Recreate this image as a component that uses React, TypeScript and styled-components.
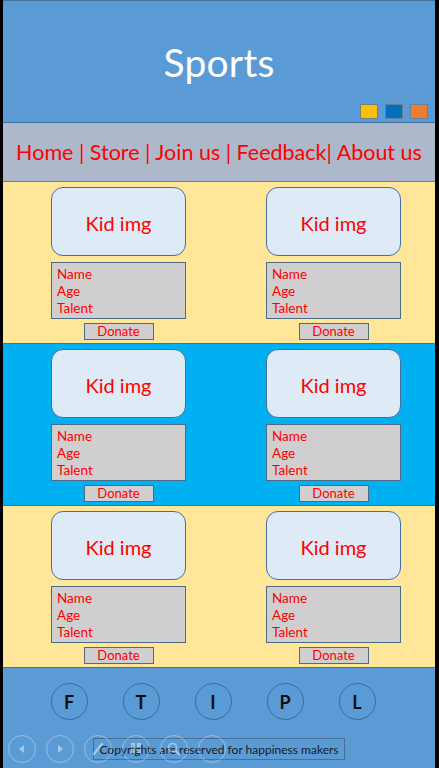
import React from "react";
import styled, { createGlobalStyle } from "styled-components";

const Global = createGlobalStyle`
  html, body { margin: 0; padding: 0; background: #000; }
  body { font-family: Lato, "Open Sans", sans-serif; }
`;

const Frame = styled.div`
  width: 432px;
  margin-left: 3px;
  height: 768px;
  display: flex;
  flex-direction: column;
  border-top: 1px solid #41719c;
  box-sizing: border-box;
  overflow: hidden;
`;

const Header = styled.header`
  height: 122px;
  background: #5b9bd5;
  border-bottom: 1px solid #41719c;
  display: flex;
  flex-direction: column;
  box-sizing: border-box;
`;

const Title = styled.h1`
  flex: 1;
  margin: 0;
  display: flex;
  align-items: center;
  justify-content: center;
  padding-top: 18px;
  color: #fff;
  font-weight: 400;
  font-size: 39px;
  letter-spacing: 0.2px;
`;

const Swatches = styled.div`
  display: flex;
  justify-content: flex-end;
  gap: 7px;
  padding: 0 7px 3px 0;
`;

const Swatch = styled.span<{ $c: string }>`
  width: 18px;
  height: 15px;
  box-sizing: border-box;
  background: ${(p) => p.$c};
  border: 1px solid #6d7f95;
`;

const Nav = styled.nav`
  height: 59px;
  background: #adb9ca;
  border-bottom: 1px solid #6b7c8f;
  box-sizing: border-box;
  display: flex;
  align-items: center;
  justify-content: center;
  color: #ff0000;
  font-size: 21.5px;
  white-space: pre;
  padding-bottom: 1px;
`;

const Band = styled.section<{ $bg: string }>`
  height: 162px;
  box-sizing: border-box;
  background: ${(p) => p.$bg};
  border-bottom: 1px solid #41719c;
  display: grid;
  grid-template-columns: 135px 135px;
  column-gap: 80px;
  padding: 5px 0 0 48px;
`;

const Card = styled.div`
  display: flex;
  flex-direction: column;
  align-items: center;
`;

const KidImg = styled.div`
  width: 135px;
  height: 69px;
  box-sizing: border-box;
  background: #deebf7;
  border: 1px solid #41719c;
  border-radius: 12px;
  display: flex;
  align-items: center;
  justify-content: center;
  color: #ff0000;
  font-size: 20px;
  padding-top: 2px;
`;

const Info = styled.div`
  margin-top: 6px;
  width: 135px;
  height: 57px;
  box-sizing: border-box;
  background: #d0cece;
  border: 1px solid #4e6b84;
  padding: 3px 0 0 5px;
  color: #ff0000;
  font-size: 13.5px;
  line-height: 17px;
`;

const Donate = styled.button`
  margin-top: 4px;
  width: 70px;
  height: 17px;
  box-sizing: border-box;
  background: #d0cece;
  border: 1px solid #4e6b84;
  padding: 0;
  color: #ff0000;
  font-family: inherit;
  font-size: 13px;
  line-height: 15px;
`;

const Footer = styled.footer`
  position: relative;
  flex: 1;
  background: #5b9bd5;
  display: flex;
  flex-direction: column;
  align-items: center;
  padding-top: 15px;
`;

const Socials = styled.div`
  display: flex;
  gap: 35px;
  margin-left: -12px;
`;

const Social = styled.div`
  width: 37px;
  height: 37px;
  box-sizing: border-box;
  border-radius: 50%;
  border: 1px solid #3a6a9a;
  display: flex;
  align-items: center;
  justify-content: center;
  font-weight: 700;
  font-size: 18px;
  color: #0d0d0d;
  padding-top: 1px;
`;

const Copy = styled.div`
  margin-top: 18px;
  width: 252px;
  height: 22px;
  box-sizing: border-box;
  border: 1px solid #4c6f95;
  display: flex;
  align-items: center;
  justify-content: center;
  font-size: 12px;
  color: #1a1a1a;
`;

const Controls = styled.div`
  position: absolute;
  left: 5px;
  top: 67px;
  display: flex;
  gap: 10px;
`;

const Ctrl = styled.div`
  width: 28px;
  height: 28px;
  box-sizing: border-box;
  border-radius: 50%;
  border: 1.5px solid rgba(255, 255, 255, 0.35);
  display: flex;
  align-items: center;
  justify-content: center;
`;

const faint = "rgba(255,255,255,0.45)";

const icons = [
  <svg width="12" height="12" viewBox="0 0 12 12"><path d="M8 2 L3 6 L8 10 Z" fill={faint} /></svg>,
  <svg width="12" height="12" viewBox="0 0 12 12"><path d="M4 2 L9 6 L4 10 Z" fill={faint} /></svg>,
  <svg width="16" height="16" viewBox="0 0 16 16"><path d="M12 3 L4 13" stroke={faint} strokeWidth="2.5" strokeLinecap="round" /></svg>,
  <svg width="16" height="16" viewBox="0 0 16 16"><rect x="3" y="2" width="4" height="4" fill={faint} /><rect x="9" y="2" width="4" height="4" fill={faint} /><rect x="3" y="8" width="4" height="4" fill={faint} /><rect x="9" y="8" width="4" height="4" fill={faint} /></svg>,
  <svg width="16" height="16" viewBox="0 0 16 16"><circle cx="6.5" cy="6.5" r="4" stroke={faint} strokeWidth="1.6" fill="none" /><path d="M9.5 9.5 L14 14" stroke={faint} strokeWidth="2" /></svg>,
  <svg width="16" height="16" viewBox="0 0 16 16"></svg>,
];

const bands = ["#ffe699", "#00b0f0", "#ffe699"];

function KidCard() {
  return (
    <Card>
      <KidImg>Kid img</KidImg>
      <Info>
        Name
        <br />
        Age
        <br />
        Talent
      </Info>
      <Donate>Donate</Donate>
    </Card>
  );
}

export default function App() {
  return (
    <>
      <Global />
      <Frame>
        <Header>
          <Title>Sports</Title>
          <Swatches>
            <Swatch $c="#ffc000" />
            <Swatch $c="#0070c0" />
            <Swatch $c="#ed7d31" />
          </Swatches>
        </Header>
        <Nav>Home | Store | Join us | Feedback| About us</Nav>
        {bands.map((bg, i) => (
          <Band key={i} $bg={bg}>
            <KidCard />
            <KidCard />
          </Band>
        ))}
        <Footer>
          <Socials>
            {["F", "T", "I", "P", "L"].map((l) => (
              <Social key={l}>{l}</Social>
            ))}
          </Socials>
          <Copy>Copyrights are reserved for happiness makers</Copy>
          <Controls>
            {icons.map((ic, i) => (
              <Ctrl key={i}>{ic}</Ctrl>
            ))}
          </Controls>
        </Footer>
      </Frame>
    </>
  );
}
